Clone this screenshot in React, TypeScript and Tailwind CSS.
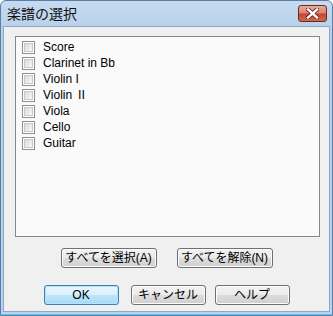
import React from 'react';

const parts = ['Score', 'Clarinet in Bb', 'Violin I', 'Violin Ⅱ', 'Viola', 'Cello', 'Guitar'];

const font = { fontFamily: '"Liberation Sans", "Noto Sans CJK JP", sans-serif' };

function Checkbox() {
  return (
    <span className="w-[13px] h-[13px] border border-[#8e8f8f] bg-white flex items-center justify-center shrink-0">
      <span className="w-[9px] h-[9px] bg-gradient-to-br from-[#dcdcdc] to-[#f7f7f7] border border-[#c8c8c8]" />
    </span>
  );
}

function Btn({ children, w, primary }: { children: React.ReactNode; w: string; primary?: boolean }) {
  return (
    <button
      className={`${w} h-[20px] rounded-[3px] border text-[12px] leading-none text-black flex items-center justify-center ${
        primary
          ? 'border-[#3c7fb1] bg-[linear-gradient(#eaf6fd_0%,#d9f0fc_50%,#bee6fd_50%,#a7d9f5_100%)] shadow-[inset_0_0_0_1px_#b6e3fb]'
          : 'border-[#707070] bg-[linear-gradient(#f2f2f2_0%,#ebebeb_50%,#dddddd_50%,#cfcfcf_100%)] shadow-[inset_0_0_0_1px_#fcfcfc]'
      }`}
    >
      {children}
    </button>
  );
}

export default function App() {
  return (
    <div className="w-[333px] h-[316px] bg-white" style={font}>
      <div className="w-[333px] h-[316px] flex flex-col border border-[#5b7ea6] rounded-t-[6px] bg-[linear-gradient(#c7dbf0,#b7cfe9_30px,#b9d1ea)] overflow-hidden">
        {/* Title bar */}
        <div className="h-[25px] flex items-start shrink-0">
          <span className="ml-[6px] mt-[4px] text-[14px] leading-[17px] text-[#111]" style={{ fontFamily: '"Noto Sans CJK JP", sans-serif' }}>
            楽譜の選択
          </span>
          <div className="ml-auto mr-[5px] mt-[4px] w-[29px] h-[17px] rounded-[3px] border border-[#6b2a22] bg-[linear-gradient(#e9a99c_0%,#d88574_45%,#c7452f_55%,#cf6a4f_100%)] flex items-center justify-center">
            <svg width="13" height="11" viewBox="0 0 13 11">
              <path d="M2 1.5 L11 9.5 M11 1.5 L2 9.5" stroke="#5a1e16" strokeWidth="4" strokeLinecap="square" />
              <path d="M2 1.5 L11 9.5 M11 1.5 L2 9.5" stroke="#ffffff" strokeWidth="2.4" strokeLinecap="square" />
            </svg>
          </div>
        </div>

        {/* Client area */}
        <div className="flex-1 mx-[2px] mb-[2px] border border-[#8ea9c8] bg-[#f0f0f0] flex flex-col">
          <div className="ml-[11px] mt-[9px] w-[305px] h-[201px] border border-[#828790] bg-[#fafafa] pt-[2px] pl-[6px]">
            {parts.map((p) => (
              <div key={p} className="h-[16px] flex items-center gap-[8px]">
                <Checkbox />
                <span className="text-[12px] leading-none text-black">{p}</span>
              </div>
            ))}
          </div>

          <div className="mt-[11px] flex justify-center gap-[20px]">
            <Btn w="w-[96px]">すべてを選択(A)</Btn>
            <Btn w="w-[96px]">すべてを解除(N)</Btn>
          </div>

          <div className="mt-[17px] flex justify-center">
            <Btn w="w-[75px]" primary>OK</Btn>
            <div className="w-[12px]" />
            <Btn w="w-[75px]">キャンセル</Btn>
            <div className="w-[9px]" />
            <Btn w="w-[75px]">ヘルプ</Btn>
          </div>
        </div>
        <div className="h-[1px] bg-[#5fc5ea] shrink-0" />
      </div>
    </div>
  );
}
